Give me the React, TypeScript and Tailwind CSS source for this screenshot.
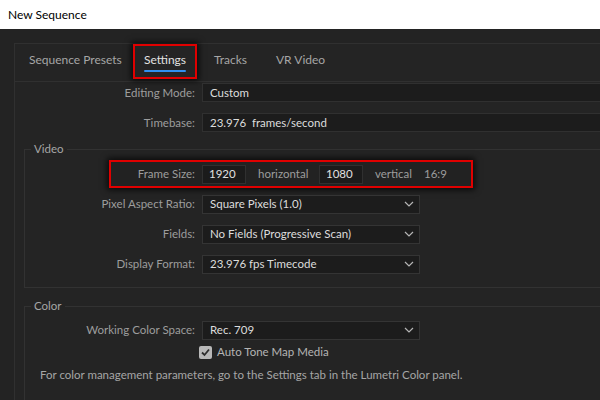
import React from "react";

const Chevron = () => (
  <svg width="10" height="6" viewBox="0 0 10 6" className="shrink-0">
    <path d="M1 1 L5 5 L9 1" fill="none" stroke="#b5b5b5" strokeWidth="1.2" />
  </svg>
);

const Select = ({ value }: { value: string }) => (
  <div className="w-[218px] h-[19px] bg-[#1c1c1c] border border-[#343434] flex items-center justify-between pl-[7px] pr-[5px] text-[#dcdcdc]">
    <span>{value}</span>
    <Chevron />
  </div>
);

const Row = ({ label, children }: { label: string; children: React.ReactNode }) => (
  <div className="flex items-center h-[30px]">
    <div className="w-[177px] text-right text-[#9d9d9d] pr-[7px] whitespace-nowrap">{label}</div>
    {children}
  </div>
);

export default function App() {
  return (
    <div
      className="w-[600px] h-[400px] overflow-hidden bg-[#232323] text-[11.5px] leading-[16px]"
      style={{ fontFamily: 'Lato, "Noto Sans", sans-serif' }}
    >
      <div className="h-[29px] bg-white flex items-center pl-[8px] text-[12px] text-black">New Sequence</div>
      <div className="pl-[14px] pt-[14px]">
        <div className="w-[700px] h-[400px] border-l border-t border-[#303030] bg-[#242424]">
          {/* tabs */}
          <div className="h-[38px] border-b border-[#303030] flex items-start text-[#a6a6a6] text-[12px]">
            <div className="ml-[14px] mt-[8px] w-[104px] whitespace-nowrap">Sequence Presets</div>
            <div className="w-[64px] h-[35px] border-2 border-[#e00000] shadow-[0_0_6px_2px_rgba(0,0,0,0.7)] flex flex-col items-center pt-[6px]">
              <span className="text-[#e2e2e2]">Settings</span>
              <div className="w-[42px] h-[2px] bg-[#2f8ff0] mt-[2px] rounded-full" />
            </div>
            <div className="ml-[17px] mt-[8px] w-[62px]">Tracks</div>
            <div className="mt-[8px] whitespace-nowrap">VR Video</div>
          </div>
          {/* editing mode / timebase */}
          <div className="flex items-center h-[19px] mt-[1px]">
            <div className="w-[187px] text-right text-[#9d9d9d] pr-[7px]">Editing Mode:</div>
            <div className="flex-1 h-[19px] bg-[#1c1c1c] border border-[#303030] flex items-center pl-[7px] text-[#dcdcdc]">Custom</div>
          </div>
          <div className="flex items-center h-[19px] mt-[11px]">
            <div className="w-[187px] text-right text-[#9d9d9d] pr-[7px]">Timebase:</div>
            <div className="flex-1 h-[19px] bg-[#1c1c1c] border border-[#303030] flex items-center pl-[7px] text-[#dcdcdc]">23.976&nbsp; frames/second</div>
          </div>

          {/* Video group */}
          <div className="relative ml-[9px] mt-[17px] border border-[#323232] pt-[9px] pb-[8px]">
            <div className="absolute -top-[9px] left-[6px] px-[3px] bg-[#242424] text-[#a6a6a6]">Video</div>
            <div className="flex items-center h-[30px]">
              <div className="ml-[84px] w-[364px] h-[28px] border-2 border-[#e00000] shadow-[0_0_6px_2px_rgba(0,0,0,0.7)] bg-[#222] flex items-center">
                <div className="w-[91px] text-right text-[#9d9d9d] pr-[7px]">Frame Size:</div>
                <div className="w-[44px] h-[19px] bg-[#1b1b1b] border border-[#303030] flex items-center pl-[6px] text-[#e0e0e0]">1920</div>
                <div className="ml-[12px] w-[61px] text-[#9d9d9d]">horizontal</div>
                <div className="w-[44px] h-[19px] bg-[#1b1b1b] border border-[#303030] flex items-center pl-[6px] text-[#e0e0e0]">1080</div>
                <div className="ml-[12px] w-[49px] text-[#9d9d9d]">vertical</div>
                <div className="text-[#9d9d9d]">16:9</div>
              </div>
            </div>
            <Row label="Pixel Aspect Ratio:">
              <Select value="Square Pixels (1.0)" />
            </Row>
            <Row label="Fields:">
              <Select value="No Fields (Progressive Scan)" />
            </Row>
            <Row label="Display Format:">
              <Select value="23.976 fps Timecode" />
            </Row>
          </div>

          {/* Color group */}
          <div className="relative ml-[9px] mt-[18px] border border-[#323232] pt-[8px] pb-[20px]">
            <div className="absolute -top-[9px] left-[6px] px-[3px] bg-[#242424] text-[#a6a6a6]">Color</div>
            <Row label="Working Color Space:">
              <Select value="Rec. 709" />
            </Row>
            <div className="flex items-center h-[14px] pl-[174px]">
              <div className="w-[13px] h-[13px] rounded-[2px] bg-[#b9b9b9] flex items-center justify-center">
                <svg width="11" height="11" viewBox="0 0 11 11">
                  <path d="M2 5.5 L4.5 8 L9 2.5" fill="none" stroke="#2e2e2e" strokeWidth="1.8" />
                </svg>
              </div>
              <span className="ml-[5px] text-[#b4b4b4]">Auto Tone Map Media</span>
            </div>
            <div className="mt-[8px] pl-[15px] text-[#a6a6a6] whitespace-nowrap">
              For color management parameters, go to the Settings tab in the Lumetri Color panel.
            </div>
          </div>
        </div>
      </div>
    </div>
  );
}
